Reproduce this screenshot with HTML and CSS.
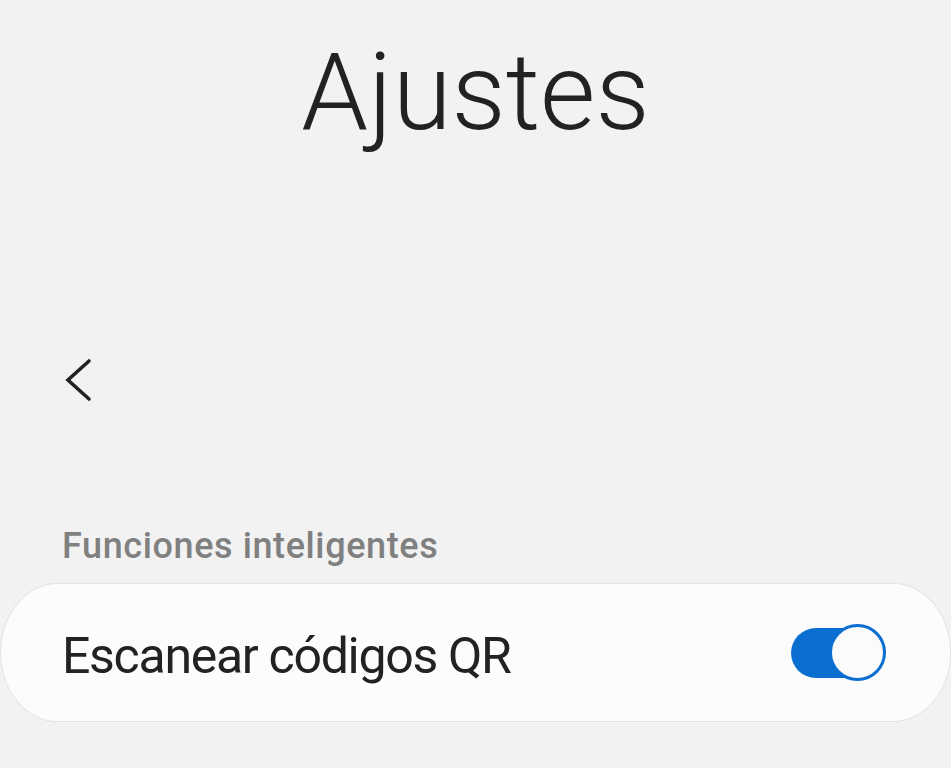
FILE: index.html
```html
<!DOCTYPE html>
<html lang="es">
<head>
<meta charset="utf-8">
<title>Ajustes</title>
<link rel="stylesheet" href="styles.css">
</head>
<body>
<div class="screen">
  <header class="header">
    <h1 class="title">Ajustes</h1>
  </header>
  <nav class="nav">
    <button class="back" aria-label="Atrás">
      <svg width="30" height="44" viewBox="0 0 30 44">
        <path d="M25 3 L4 22 L25 41" fill="none" stroke="#222" stroke-width="3.6" stroke-linecap="round" stroke-linejoin="miter"/>
      </svg>
    </button>
  </nav>
  <h2 class="section-title">Funciones inteligentes</h2>
  <div class="card">
    <span class="card-label">Escanear códigos QR</span>
    <span class="switch on">
      <span class="track"></span>
      <span class="knob"></span>
    </span>
  </div>
  <h2 class="section-title next">Imágenes</h2>
</div>
</body>
</html>
```
FILE: styles.css
```css
html, body {
  margin: 0;
  padding: 0;
  background: #f2f2f2;
  height: 768px;
  overflow: hidden;
}
.screen {
  font-family: Roboto, "Noto Sans", sans-serif;
  color: #222;
}
.header {
  height: 360px;
  padding-top: 39px;
  box-sizing: border-box;
}
.title {
  margin: 0;
  font-size: 107px;
  line-height: 107px;
  font-weight: 300;
  text-align: center;
  color: #222;
  letter-spacing: 0;
}
.nav {
  height: 40px;
  display: flex;
  align-items: center;
  padding-left: 64px;
}
.back {
  border: 0;
  background: none;
  padding: 0;
  width: 30px;
  height: 44px;
  display: flex;
}
.section-title {
  margin: 124px 0 0 0;
  padding-left: 62px;
  font-size: 36px;
  line-height: 44px;
  font-weight: 500;
  color: #808080;
  letter-spacing: 0.6px;
}
.section-title.next {
  margin-top: 39px;
}
.card {
  margin-top: 15px;
  height: 139px;
  box-sizing: border-box;
  background: #fcfcfc;
  border: 1px solid #e3e3e3;
  border-radius: 58px / 70px;
  display: flex;
  align-items: center;
  justify-content: space-between;
  padding: 6px 64px 0 61px;
}
.card-label {
  font-size: 50px;
  font-weight: 400;
  color: #222;
  letter-spacing: -1.3px;
}
.switch {
  position: relative;
  width: 95px;
  height: 57px;
  margin-top: -6px;
  display: block;
}
.track {
  position: absolute;
  left: 0;
  top: 3.5px;
  width: 88px;
  height: 50px;
  border-radius: 25px;
  background: #0b6fd1;
}
.knob {
  position: absolute;
  right: 0;
  top: 0;
  width: 57px;
  height: 57px;
  box-sizing: border-box;
  border-radius: 50%;
  background: #fbfbfb;
  border: 3px solid #0b6fd1;
}
```
